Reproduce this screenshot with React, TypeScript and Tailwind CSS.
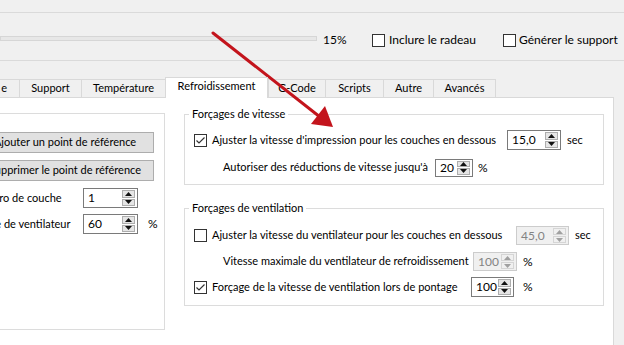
import React from "react";

function Check({ checked }: { checked?: boolean }) {
  return (
    <span className="flex h-[13px] w-[13px] shrink-0 items-center justify-center border border-[#333333] bg-white">
      {checked && (
        <svg width="11" height="11" viewBox="0 0 11 11">
          <path d="M1.5 5.5 L4 8 L9.5 2.5" fill="none" stroke="#333333" strokeWidth="1.2" />
        </svg>
      )}
    </span>
  );
}

function Arrow({ up, disabled }: { up?: boolean; disabled?: boolean }) {
  return (
    <svg width="7" height="4" viewBox="0 0 7 4">
      <path d={up ? "M0 4 L3.5 0 L7 4Z" : "M0 0 L3.5 4 L7 0Z"} fill={disabled ? "#a0a0a0" : "#111111"} />
    </svg>
  );
}

function Spin({ value, size, disabled }: { value: string; size: string; disabled?: boolean }) {
  return (
    <div
      className={`flex shrink-0 border ${size} ${
        disabled ? "border-[#cccccc] bg-[#f0f0f0] text-[#838383]" : "border-[#7a7a7a] bg-white text-black"
      }`}
    >
      <div className="flex flex-1 items-center pl-[4px] text-[12px] leading-none">{value}</div>
      <div className="flex w-[15px] flex-col gap-[1px] py-[1px] pr-[2px]">
        <div
          className={`flex flex-1 items-center justify-center border ${
            disabled ? "border-[#d5d5d5] bg-[#f0f0f0]" : "border-[#adadad] bg-[#e5e5e5]"
          }`}
        >
          <Arrow up disabled={disabled} />
        </div>
        <div
          className={`flex flex-1 items-center justify-center border ${
            disabled ? "border-[#d5d5d5] bg-[#f0f0f0]" : "border-[#adadad] bg-[#e5e5e5]"
          }`}
        >
          <Arrow disabled={disabled} />
        </div>
      </div>
    </div>
  );
}

function Tab({ label, w, active }: { label: string; w: string; active?: boolean }) {
  return (
    <div
      className={`flex shrink-0 items-center justify-center border-l border-t border-[#d9d9d9] ${w} ${
        active ? "relative z-10 -mb-px h-[21px] border-r bg-white pb-[3px]" : "h-[18px] bg-[#f0f0f0]"
      }`}
    >
      {label}
    </div>
  );
}

export default function App() {
  return (
    <div className="relative h-[345px] w-[624px] overflow-hidden bg-[#f0f0f0] font-['Lato',sans-serif] text-[11px] text-black">
      {/* top line */}
      <div className="h-[13px] border-b border-[#dadada]" />
      {/* toolbar row */}
      <div className="flex h-[48px] items-center border-b border-[#dadada] pt-[7px]">
        <div className="mb-[3px] h-[5px] w-[317px] shrink-0 border border-[#d6d6d6] bg-[#e7e7e7]" />
        <div className="ml-[6px] w-[49px] shrink-0 text-[12px]">15%</div>
        <Check />
        <div className="ml-[4px] w-[114px] shrink-0 whitespace-nowrap text-[12px]">Inclure le radeau</div>
        <Check />
        <div className="ml-[3px] whitespace-nowrap text-[12px]">Générer le support</div>
      </div>
      <div className="h-[16px]" />
      {/* tabs */}
      <div className="flex h-[20px] items-end whitespace-nowrap">
        <div className="flex h-[18px] w-[19px] shrink-0 items-center justify-end overflow-hidden border-t border-[#d9d9d9] bg-[#f0f0f0] pr-[12px]">
          e
        </div>
        <Tab label="Support" w="w-[62px]" />
        <Tab label="Température" w="w-[84px]" />
        <Tab label="Refroidissement" w="w-[103px]" active />
        <Tab label="G-Code" w="w-[57px]" />
        <Tab label="Scripts" w="w-[58px]" />
        <Tab label="Autre" w="w-[50px]" />
        <div className="flex h-[18px] w-[63px] shrink-0 items-center justify-center border-x border-t border-[#d9d9d9] bg-[#f0f0f0]">
          Avancés
        </div>
      </div>
      {/* pane */}
      <div className="flex h-[248px] w-[614px] items-start border-r border-t border-[#d9d9d9] bg-white">
        {/* left group */}
        <div className="-ml-[36px] mt-[15px] flex h-[217px] w-[201px] shrink-0 flex-col border border-[#dcdcdc] pt-[18px] whitespace-nowrap">
          <div className="ml-[9px] flex h-[21px] w-[180px] items-center justify-center border border-[#adadad] bg-[#e1e1e1] pl-[2px]">
            Ajouter un point de référence
          </div>
          <div className="ml-[9px] mt-[7px] flex h-[21px] w-[180px] items-center justify-center border border-[#adadad] bg-[#e1e1e1] pl-[2px]">
            Supprimer le point de référence
          </div>
          <div className="mt-[7px] flex h-[20px] items-center">
            <div className="ml-[1px] w-[117px] shrink-0 pl-[4px]">Numéro de couche</div>
            <Spin value="1" size="w-[55px] h-[20px]" />
          </div>
          <div className="mt-[6px] flex h-[20px] items-center">
            <div className="ml-[1px] w-[117px] shrink-0">Vitesse de ventilateur</div>
            <Spin value="60" size="w-[55px] h-[20px]" />
            <div className="ml-[10px] text-[12px]">%</div>
          </div>
        </div>
        {/* right column */}
        <div className="ml-[19px] flex w-[420px] shrink-0 flex-col whitespace-nowrap">
          <fieldset className="mt-[8px] border border-[#dcdcdc] pb-[7px]">
            <legend className="ml-[4px] h-[16px] px-[3px] leading-[16px]">Forçages de vitesse</legend>
            <div className="mt-[8px] flex h-[20px] items-center">
              <div className="ml-[9px]">
                <Check checked />
              </div>
              <div className="ml-[5px] w-[295px] shrink-0">Ajuster la vitesse d'impression pour les couches en dessous</div>
              <Spin value="15,0" size="w-[54px] h-[20px]" />
              <div className="ml-[6px]">sec</div>
            </div>
            <div className="mt-[8px] flex h-[19px] items-center">
              <div className="ml-[38px] w-[212px] shrink-0">Autoriser des réductions de vitesse jusqu'à</div>
              <Spin value="20" size="w-[38px] h-[18px]" />
              <div className="ml-[5px] text-[12px]">%</div>
            </div>
          </fieldset>
          <fieldset className="mt-[15px] border border-[#dcdcdc] pb-[8px]">
            <legend className="ml-[4px] h-[16px] px-[3px] leading-[16px]">Forçages de ventilation</legend>
            <div className="mt-[10px] flex h-[19px] items-center">
              <div className="ml-[9px]">
                <Check />
              </div>
              <div className="ml-[5px] w-[304px] shrink-0">Ajuster la vitesse du ventilateur pour les couches en dessous</div>
              <Spin value="45,0" size="w-[53px] h-[19px]" disabled />
              <div className="ml-[6px]">sec</div>
            </div>
            <div className="mt-[7px] flex h-[19px] items-center">
              <div className="ml-[38px] w-[250px] shrink-0">Vitesse maximale du ventilateur de refroidissement</div>
              <Spin value="100" size="w-[44px] h-[19px]" disabled />
              <div className="ml-[6px] text-[12px]">%</div>
            </div>
            <div className="mt-[6px] flex h-[20px] items-center">
              <div className="ml-[9px]">
                <Check checked />
              </div>
              <div className="ml-[5px] w-[259px] shrink-0">Forçage de la vitesse de ventilation lors de pontage</div>
              <Spin value="100" size="w-[43px] h-[20px]" />
              <div className="ml-[9px] text-[12px]">%</div>
            </div>
          </fieldset>
        </div>
      </div>
      {/* red annotation arrow */}
      <svg className="pointer-events-none absolute left-0 top-0" width="624" height="345" viewBox="0 0 624 345">
        <line x1="213" y1="33" x2="320" y2="117" stroke="#c3141c" strokeWidth="3" strokeLinecap="round" />
        <polygon points="333,127 311,124 325,106" fill="#c3141c" />
      </svg>
    </div>
  );
}
